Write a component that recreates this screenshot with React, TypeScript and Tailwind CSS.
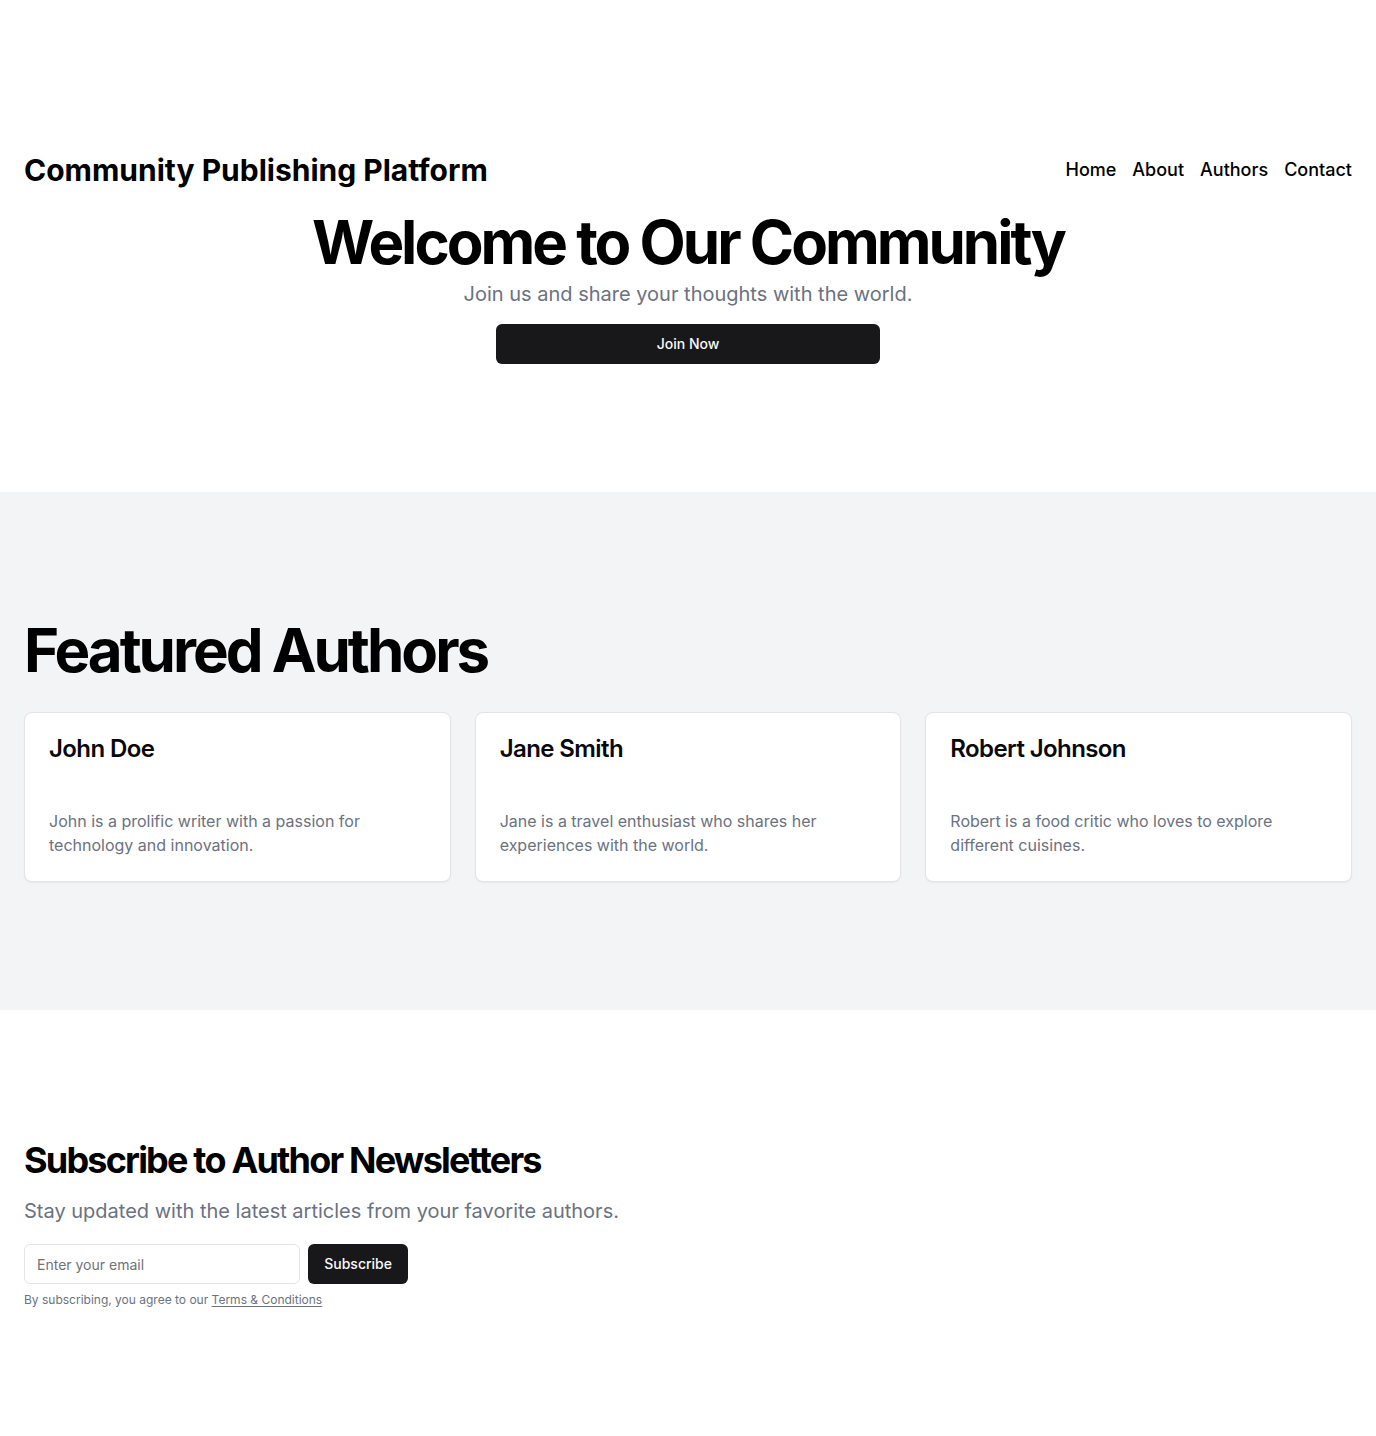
const nav = ['Home', 'About', 'Authors', 'Contact'];

const authors = [
  { name: 'John Doe', bio: 'John is a prolific writer with a passion for technology and innovation.' },
  { name: 'Jane Smith', bio: 'Jane is a travel enthusiast who shares her experiences with the world.' },
  { name: 'Robert Johnson', bio: 'Robert is a food critic who loves to explore different cuisines.' },
];

function Hero() {
  return (
    <section className="w-full px-6 pt-38 pb-32">
      <header className="flex items-center justify-between">
        <h1 className="text-3xl font-bold">Community Publishing Platform</h1>
        <nav className="flex gap-4">
          {nav.map((label) => (
            <a key={label} href="#" className="text-lg font-medium">
              {label}
            </a>
          ))}
        </nav>
      </header>
      <div className="mt-6 flex flex-col items-center text-center">
        <h2 className="text-6xl font-bold tracking-tighter">Welcome to Our Community</h2>
        <p className="mt-2 text-xl text-[#6b7280]">Join us and share your thoughts with the world.</p>
        <button
          type="button"
          className="mt-4 h-10 w-full max-w-sm rounded-md bg-[#18181b] px-4 text-sm font-medium text-[#fafafa]"
        >
          Join Now
        </button>
      </div>
    </section>
  );
}

function FeaturedAuthors() {
  return (
    <section className="w-full bg-[#f3f4f6] px-6 py-32">
      <h2 className="text-6xl font-bold tracking-tighter">Featured Authors</h2>
      <div className="mt-8 grid grid-cols-3 gap-6">
        {authors.map((author) => (
          <article key={author.name} className="rounded-lg border border-[#e4e4e7] bg-white shadow-xs">
            <div className="p-6">
              <h3 className="text-2xl leading-none font-semibold tracking-tight text-[#09090b]">{author.name}</h3>
            </div>
            <p className="p-6 text-[#6b7280]">{author.bio}</p>
          </article>
        ))}
      </div>
    </section>
  );
}

function Newsletter() {
  return (
    <section className="w-full px-6 py-32">
      <h2 className="text-4xl leading-tight font-bold tracking-tighter">Subscribe to Author Newsletters</h2>
      <p className="mt-3 text-xl leading-[33px] text-[#6b7280]">
        Stay updated with the latest articles from your favorite authors.
      </p>
      <div className="mt-4 w-full max-w-sm">
        <form className="flex gap-2">
          <input
            type="email"
            aria-label="Email"
            placeholder="Enter your email"
            className="h-10 min-w-0 flex-1 rounded-md border border-[#e4e4e7] bg-white px-3 text-sm placeholder:text-[#71717a]"
          />
          <button type="submit" className="h-10 rounded-md bg-[#18181b] px-4 text-sm font-medium text-[#fafafa]">
            Subscribe
          </button>
        </form>
        <p className="mt-2 text-xs text-[#6b7280]">
          By subscribing, you agree to our{' '}
          <a href="#" className="underline underline-offset-2">
            Terms &amp; Conditions
          </a>
        </p>
      </div>
    </section>
  );
}

export default function App() {
  return (
    <main className="bg-white font-[Inter,sans-serif] text-black">
      <Hero />
      <FeaturedAuthors />
      <Newsletter />
    </main>
  );
}
